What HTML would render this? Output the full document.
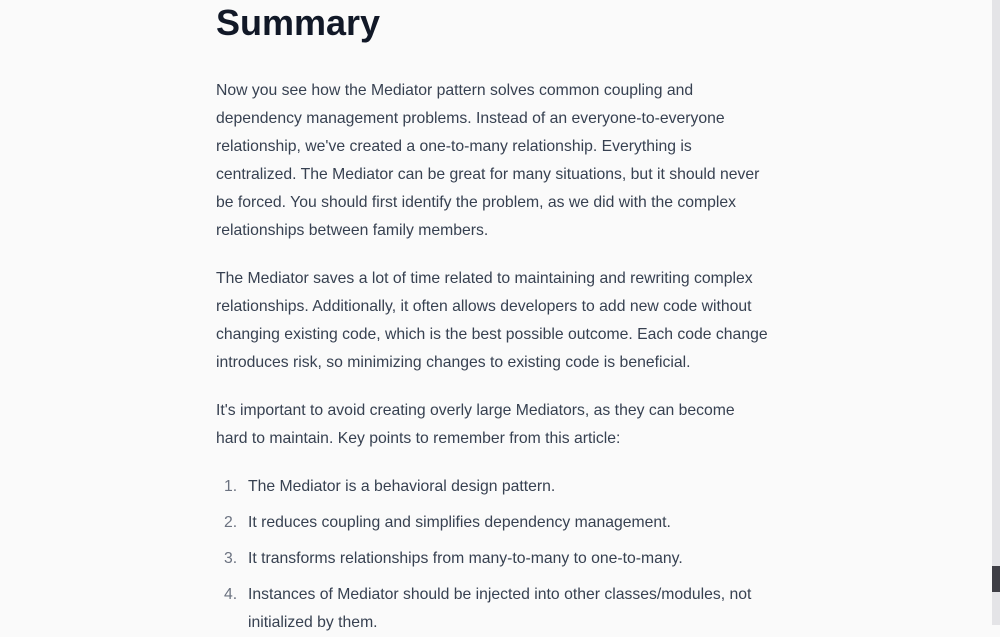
<!DOCTYPE html>
<html><head><meta charset="utf-8"><style>
html,body{margin:0;padding:0;width:1000px;height:625px;overflow:hidden;background:#fafafa;font-family:"Liberation Sans",sans-serif;}
.t{position:absolute;left:216px;white-space:nowrap;font-size:15.75px;color:#374151;line-height:28px;}
h1{position:absolute;left:216px;top:0px;margin:0;font-size:36px;font-weight:bold;color:#111827;line-height:46px;}
.n{position:absolute;left:224px;font-size:15.75px;color:#6b7280;line-height:28px;}
.sb{position:absolute;left:992px;top:0;width:8px;height:625px;background:#e4e4e7;}
.th{position:absolute;left:992px;top:566px;width:8px;height:26px;background:#3f3f46;}
</style></head><body>
<h1>Summary</h1>
<div class="t" style="top:77px">Now you see how the Mediator pattern solves common coupling and<br>dependency management problems. Instead of an everyone-to-everyone<br>relationship, we've created a one-to-many relationship. Everything is<br>centralized. The Mediator can be great for many situations, but it should never<br>be forced. You should first identify the problem, as we did with the complex<br>relationships between family members.</div>
<div class="t" style="top:265px">The Mediator saves a lot of time related to maintaining and rewriting complex<br>relationships. Additionally, it often allows developers to add new code without<br>changing existing code, which is the best possible outcome. Each code change<br>introduces risk, so minimizing changes to existing code is beneficial.</div>
<div class="t" style="top:397px">It's important to avoid creating overly large Mediators, as they can become<br>hard to maintain. Key points to remember from this article:</div>
<div class="n" style="top:473px">1.</div><div class="t" style="top:473px;left:248px">The Mediator is a behavioral design pattern.</div>
<div class="n" style="top:509px">2.</div><div class="t" style="top:509px;left:248px">It reduces coupling and simplifies dependency management.</div>
<div class="n" style="top:545px">3.</div><div class="t" style="top:545px;left:248px">It transforms relationships from many-to-many to one-to-many.</div>
<div class="n" style="top:581px">4.</div><div class="t" style="top:581px;left:248px">Instances of Mediator should be injected into other classes/modules, not<br>initialized by them.</div>
<div class="sb"></div><div class="th"></div>
</body></html>
